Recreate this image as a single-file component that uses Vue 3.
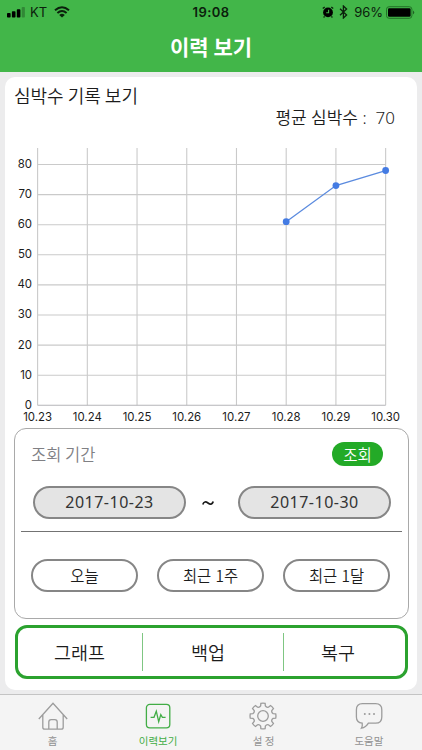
<template>
  <div class="app">
    <header class="header">
      <div class="status">
        <div class="status-side">
          <svg class="signal" width="20" height="12" viewBox="0 0 20 12">
            <rect x="0" y="7" width="3.6" height="4.6" rx="0.8" />
            <rect x="4.9" y="5.2" width="3.6" height="6.4" rx="0.8" />
            <rect x="9.8" y="3.2" width="3.6" height="8.4" rx="0.8" />
            <rect x="14.7" y="1" width="3.2" height="10.6" rx="0.8" opacity="0.25" />
          </svg>
          <span class="carrier">KT</span>
          <svg class="wifi" width="16" height="12" viewBox="0 0 16 12">
            <path d="M1 4.3Q8 -1.8 15 4.3" />
            <path d="M3.4 6.9Q8 3 12.6 6.9" />
            <path class="solid" d="M8 11.6L5.2 8.9Q8 6.8 10.8 8.9Z" />
          </svg>
        </div>
        <span class="clock">19:08</span>
        <div class="status-side right">
          <svg class="alarm" width="12" height="12" viewBox="0 0 12 12">
            <circle cx="6" cy="6.4" r="4.9" />
            <path class="ears" d="M0.8 2.6L2.7 0.9M11.2 2.6L9.3 0.9M2.6 10.4L1.6 11.5M9.4 10.4L10.4 11.5" />
            <path class="hands" d="M6.6 3.8V6.8H4.2" />
          </svg>
          <svg class="bluetooth" width="9" height="14" viewBox="0 0 9 14">
            <path d="M1 3.8L7.6 9.9L4.4 13V1L7.6 4.1L1 10.2" />
          </svg>
          <span class="percent">96%</span>
          <svg class="battery" width="29" height="13" viewBox="0 0 29 13">
            <rect class="shell" x="0.5" y="0.7" width="25.4" height="11.6" rx="2.6" />
            <rect x="2" y="2.2" width="22.6" height="8.6" rx="1.2" />
            <path d="M27.2 4.6Q29.2 6.5 27.2 8.4Z" opacity="0.6" />
          </svg>
        </div>
      </div>
      <h1>이력 보기</h1>
    </header>

    <main class="card">
      <h2>심박수 기록 보기</h2>
      <p class="average">평균 심박수 :<span>70</span></p>

      <svg class="chart" width="412" height="290" viewBox="0 0 412 290">
        <line
          v-for="(d, i) in days"
          :key="d"
          class="grid"
          :x1="px(i)"
          :x2="px(i)"
          y1="9"
          :y2="py(0)"
        />
        <line
          v-for="v in ticks"
          :key="v"
          class="grid"
          :class="{ axis: v === 0 }"
          :x1="px(0)"
          :x2="px(7)"
          :y1="py(v)"
          :y2="py(v)"
        />
        <text v-for="v in ticks" :key="'y' + v" x="27" :y="py(v) + 3.4" text-anchor="end">{{ v }}</text>
        <text v-for="(d, i) in days" :key="'x' + d" :x="px(i)" y="282.4" text-anchor="middle">{{ d }}</text>
        <polyline class="series" :points="linePoints" />
        <circle v-for="r in records" :key="r.day" class="dot" :cx="px(r.day)" :cy="py(r.bpm)" r="3.4" />
      </svg>

      <section class="period">
        <div class="period-head">
          <span>조회 기간</span>
          <button class="search">조회</button>
        </div>
        <div class="dates">
          <button class="pill date">2017-10-23</button>
          <svg class="tilde" width="12" height="8" viewBox="0 0 12 8">
            <path d="M0.8 5.6C1.8 2.4 3.8 2.4 6 4C8.2 5.7 10.2 5.6 11.2 2.6" />
          </svg>
          <button class="pill date">2017-10-30</button>
        </div>
        <div class="ranges">
          <button v-for="r in ranges" :key="r" class="pill">{{ r }}</button>
        </div>
      </section>

      <div class="actions">
        <button v-for="a in actions" :key="a">{{ a }}</button>
      </div>
    </main>

    <nav class="tabs">
      <a class="tab">
        <svg width="30" height="28" viewBox="0 0 30 28">
          <path d="M0.8 17L15 1.2L29.2 17M4.8 12.7V25.2Q4.8 27.2 6.8 27.2H23.2Q25.2 27.2 25.2 25.2V12.7" />
          <path d="M10.8 27V20Q10.8 17.6 13.2 17.6H16.8Q19.2 17.6 19.2 20V27" />
        </svg>
        <span>홈</span>
      </a>
      <a class="tab active">
        <svg width="30" height="28" viewBox="0 0 30 28">
          <rect x="3.4" y="2.4" width="23.4" height="23.4" rx="3.4" />
          <path d="M7.6 15.3H11L13.3 9.2L15.7 19.6L17.8 12.6L19.4 15.3H22.6" />
        </svg>
        <span>이력보기</span>
      </a>
      <a class="tab">
        <svg width="30" height="28" viewBox="0 0 30 28">
          <path :d="gearPath" />
          <circle cx="15" cy="14" r="5.3" />
        </svg>
        <span>설 정</span>
      </a>
      <a class="tab">
        <svg width="30" height="28" viewBox="0 0 30 28">
          <path d="M8.4 1.7H21.6Q27.8 1.7 27.8 7.9V14.9Q27.8 21.1 21.6 21.1H14.4Q11.9 25.2 7.4 26.2Q8.7 23.6 8.2 21.1Q2.4 20.4 2.4 14.9V7.9Q2.4 1.7 8.4 1.7Z" />
          <path class="dots" d="M10.8 12H10.81M15.4 12H15.41M20 12H20.01" />
        </svg>
        <span>도움말</span>
      </a>
    </nav>
  </div>
</template>

<script setup>
import { computed } from 'vue'

const days = ['10.23', '10.24', '10.25', '10.26', '10.27', '10.28', '10.29', '10.30']
const ticks = [80, 70, 60, 50, 40, 30, 20, 10, 0]
const records = [
  { day: 5, bpm: 61 },
  { day: 6, bpm: 73 },
  { day: 7, bpm: 78 }
]
const ranges = ['오늘', '최근 1주', '최근 1달']
const actions = ['그래프', '백업', '복구']

// chart scale
const px = (i) => 32.6 + i * 49.72
const py = (v) => 266.3 - v * 3.01

const linePoints = computed(() => records.map((r) => `${px(r.day)},${py(r.bpm)}`).join(' '))

// gear outline, 8 teeth
const gearPath = computed(() => {
  const pt = (r, deg) => {
    const a = (deg * Math.PI) / 180
    return `${(15 + r * Math.cos(a)).toFixed(2)} ${(14 + r * Math.sin(a)).toFixed(2)}`
  }
  let d = ''
  for (let i = 0; i < 8; i++) {
    const c = i * 45
    d += `${i ? 'L' : 'M'}${pt(10.4, c - 13)}L${pt(12.9, c - 9.5)}`
    d += `Q${pt(13.2, c)} ${pt(12.9, c + 9.5)}L${pt(10.4, c + 13)}`
    d += `Q${pt(9, c + 22.5)} ${pt(10.4, c + 32)}`
  }
  return d + 'Z'
})
</script>

<style>
body {
  margin: 0;
  background: #ececed;
}
</style>

<style scoped>
.app {
  width: 422px;
  height: 750px;
  display: flex;
  flex-direction: column;
  overflow: hidden;
  background: #ececed;
  color: #1c1c1c;
  font-family: "Noto Sans CJK KR", sans-serif;
  font-weight: 350;
}
button {
  margin: 0;
  padding: 0;
  border: none;
  background: none;
  font: inherit;
  color: inherit;
}

.header {
  box-sizing: border-box;
  height: 72px;
  flex: none;
  background: #42b649;
}
.status {
  display: flex;
  align-items: center;
  height: 24px;
  padding: 0 7px;
  font-family: Inter, sans-serif;
  font-size: 13px;
  font-weight: 400;
  color: #0b200c;
}
.status-side {
  display: flex;
  align-items: center;
  flex: 1 1 0;
}
.right { justify-content: flex-end; }
.carrier { margin-left: 3px; }
.wifi { margin-left: 7px; }
.wifi path {
  fill: none;
  stroke: #0b200c;
  stroke-width: 2;
}
.wifi .solid {
  fill: #0b200c;
  stroke: none;
}
.clock {
  font-weight: 600;
  font-size: 13px;
  letter-spacing: 0.4px;
}
.ears, .hands, .bluetooth path {
  fill: none;
  stroke: #0b200c;
  stroke-width: 1.3;
}
.hands {
  stroke: #42b649;
  stroke-width: 1.1;
}
.bluetooth { margin-left: 5px; }
.percent { margin: 0 3px 0 6px; }
.shell {
  fill: none;
  stroke: #1f6b24;
  stroke-width: 0.9;
}
h1 {
  margin: 7px 0 0;
  text-align: center;
  font-size: 21px;
  line-height: 30px;
  font-weight: 700;
  color: #fff;
}

.card {
  box-sizing: border-box;
  display: flex;
  flex-direction: column;
  flex: none;
  width: 412px;
  height: 613px;
  margin: 5px 5px 0;
  border-radius: 10px;
  background: #fff;
}
h2 {
  margin: 4px 0 0 9px;
  font-size: 18px;
  line-height: 28px;
  font-weight: 350;
}
.average {
  margin: -4px 22px 0 0;
  text-align: right;
  font-family: "Noto Sans", "Noto Sans CJK KR", sans-serif;
  font-size: 17px;
  line-height: 26px;
  font-weight: 350;
}
.average span { margin-left: 9px; }
.chart {
  display: block;
  flex: none;
  margin-top: 8px;
}
.grid {
  stroke: #cacaca;
  stroke-width: 1.1;
}
.axis { stroke: #b4b4b8; }
.chart text {
  font-family: Inter, sans-serif;
  font-size: 11.4px;
  font-weight: 400;
  fill: #1c1c1c;
}
.series {
  fill: none;
  stroke: #5b8bdf;
  stroke-width: 1.3;
}
.dot { fill: #447be3; }

.period {
  box-sizing: border-box;
  width: 395px;
  height: 191px;
  flex: none;
  margin: -1px 0 0 9px;
  border: 1px solid #a9a9a9;
  border-radius: 12px;
}
.period-head {
  display: flex;
  justify-content: space-between;
  align-items: center;
  height: 24px;
  padding: 13px 25px 0 16px;
  font-size: 16.5px;
  color: #808084;
}
.search {
  width: 51px;
  height: 24px;
  border-radius: 12px;
  background: #23aa27;
  color: #fff;
  font-size: 15.5px;
  line-height: 23px;
}
.pill {
  box-sizing: border-box;
  width: 107px;
  height: 33px;
  border: 2px solid #868686;
  border-radius: 17px;
  font-size: 15.4px;
  line-height: 27px;
  word-spacing: 0.8px;
  background: #fff;
}
.date {
  width: 153px;
  font-family: "Noto Sans", sans-serif;
  font-size: 16px;
  font-weight: 400;
  letter-spacing: 0.5px;
  color: #333;
  background: #e4e4e4;
}
.dates {
  display: flex;
  justify-content: space-between;
  align-items: center;
  margin: 20px 6px 0;
  padding: 0 11px 12px 12px;
  border-bottom: 1.5px solid #737373;
}
.tilde { margin-right: 8px; }
.tilde path {
  fill: none;
  stroke: #1c1c1c;
  stroke-width: 1.7;
}
.ranges {
  display: flex;
  justify-content: space-between;
  margin: 27px 18px 0 16px;
}

.actions {
  box-sizing: border-box;
  display: grid;
  grid-template-columns: 124px 141px 1fr;
  align-items: center;
  width: 393px;
  height: 54px;
  flex: none;
  margin: 6px 0 0 9.5px;
  border: 3px solid #2ba22f;
  border-radius: 12px;
  font-size: 18.5px;
}
.actions button {
  height: 38px;
  line-height: 36px;
}
.actions button + button { border-left: 1px solid #7fc682; }
.actions button:nth-child(2) { padding-right: 9px; }
.actions button:nth-child(3) { padding-right: 12px; }

.tabs {
  display: grid;
  grid-template-columns: repeat(4, 105.4px);
  flex: 1;
  margin-top: 4px;
  border-top: 1px solid #c4c4c4;
  background: #f4f4f4;
}
.tab {
  display: flex;
  flex-direction: column;
  align-items: center;
  padding-top: 7px;
  font-size: 10.5px;
  line-height: 18px;
  font-weight: 400;
  color: #929292;
}
.tab svg {
  flex: none;
  margin-bottom: 2px;
  fill: none;
  stroke: #9c9c9c;
  stroke-width: 1.3;
}
.tab .dots {
  stroke-width: 2;
  stroke-linecap: round;
}
.active { color: #42ad46; }
.active svg { stroke: #42ad46; }
</style>
